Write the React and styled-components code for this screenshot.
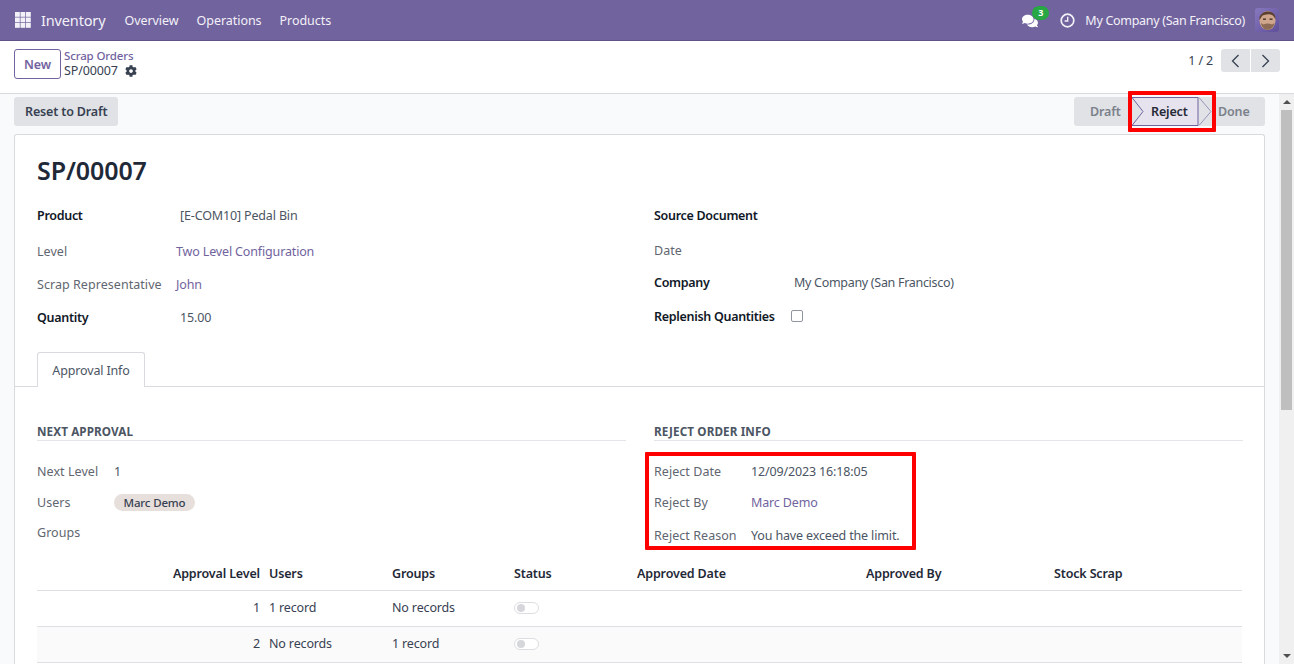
import React from 'react';
import styled, { createGlobalStyle } from 'styled-components';
import { FaCog, FaComments } from 'react-icons/fa';

const font = '"Noto Sans", "Open Sans", Arial, sans-serif';

const GlobalStyle = createGlobalStyle`
  html, body { margin: 0; padding: 0; height: 100%; overflow: hidden; }
  body { font-family: ${font}; font-size: 12.5px; letter-spacing: -0.15px; color: #374151; background: #fff; }
  * { box-sizing: border-box; }
`;

const Page = styled.div`
  width: 1294px;
  height: 664px;
  display: flex;
  flex-direction: column;
  overflow: hidden;
  position: relative;
`;

const NavBar = styled.header`
  height: 41px;
  flex: none;
  background: #71639e;
  border-bottom: 1px solid #5f5386;
  color: #f3f1f8;
  display: flex;
  align-items: center;
  padding: 0 15px;
`;

const AppsIcon = styled.svg`
  width: 16px;
  height: 16px;
  margin-right: 10px;
`;

const AppName = styled.span`
  font-size: 14.5px;
  margin-right: 19px;
`;

const NavLink = styled.span`
  margin-right: 18px;
  letter-spacing: -0.05px;
`;

const NavRight = styled.div`
  margin-left: auto;
  display: flex;
  align-items: center;
`;

const MessageWrap = styled.div`
  position: relative;
  width: 16px;
  height: 14px;
  margin-right: 22px;
  color: #fff;
  display: flex;
`;

const Badge = styled.span`
  position: absolute;
  top: -7px;
  left: 10px;
  width: 17px;
  height: 14px;
  border-radius: 7px;
  background: #28a745;
  color: #fff;
  font-size: 9px;
  font-weight: 700;
  line-height: 14px;
  text-align: center;
`;

const ClockIcon = styled.svg`
  width: 15px;
  height: 15px;
  margin-right: 10px;
`;

const CompanyName = styled.span`
  margin-right: 10px;
  letter-spacing: -0.3px;
`;

const Avatar = styled.svg`
  width: 24px;
  height: 24px;
  border-radius: 3px;
`;

const ControlPanel = styled.div`
  height: 53px;
  flex: none;
  background: #fff;
  border-bottom: 1px solid #d8dadd;
  display: flex;
  align-items: flex-start;
  padding: 8px 14px 0;
`;

const NewButton = styled.button`
  width: 47px;
  height: 30px;
  border: 1px solid #71639e;
  border-radius: 3px;
  background: #fff;
  color: #71639e;
  font: 600 12.5px ${font};
  letter-spacing: -0.15px;
  padding: 0;
  margin-right: 3px;
`;

const Breadcrumbs = styled.div`
  display: flex;
  flex-direction: column;
  line-height: 15px;
  margin-top: -1px;
`;

const CrumbLink = styled.span`
  color: #71639e;
  font-weight: 500;
  font-size: 11.5px;
  height: 15px;
`;

const CrumbCurrent = styled.span`
  display: flex;
  align-items: center;
  gap: 7px;
  color: #374151;
  font-size: 12.5px;
  svg { color: #374151; }
`;

const Pager = styled.div`
  margin-left: auto;
  display: flex;
  align-items: center;
`;

const PagerText = styled.span`
  margin-right: 8px;
`;

const PagerButton = styled.button`
  width: 29px;
  height: 23px;
  border: 0;
  padding: 0;
  background: #e0e2e6;
  display: flex;
  align-items: center;
  justify-content: center;
  border-radius: ${p => (p.$right ? '0 3px 3px 0' : '3px 0 0 3px')};
  margin-left: ${p => (p.$right ? '1px' : '0')};
`;

const Body = styled.div`
  flex: 1;
  display: flex;
  min-height: 0;
  background: #f9fafb;
`;

const Content = styled.main`
  flex: 1;
  min-width: 0;
  overflow: hidden;
  padding: 0 14px;
`;

const StatusRow = styled.div`
  height: 40px;
  display: flex;
  align-items: flex-start;
  justify-content: space-between;
  padding-top: 3px;
`;

const SmallButton = styled.button`
  height: 29px;
  padding: 0 11px;
  border: 0;
  border-radius: 3px;
  background: #e0e2e6;
  color: #374151;
  font: 600 12.5px ${font};
  letter-spacing: -0.15px;
`;

const StatusBar = styled.div`
  position: relative;
  width: 191px;
  height: 29px;
  border-radius: 3px;
  background: #e0e2e6;
  display: flex;
  align-items: center;
  font-weight: 600;
  color: #7b818a;
`;

const StatusArrow = styled.svg`
  position: absolute;
  left: 57px;
  top: 0;
`;

const StatusStep = styled.span`
  position: absolute;
  left: ${p => p.$left}px;
  color: ${p => (p.$active ? '#262a36' : '#7b818a')};
`;

const Sheet = styled.section`
  background: #fff;
  border: 1px solid #d8dadd;
  border-bottom: 0;
  border-radius: 3px 3px 0 0;
  height: 600px;
`;

const SheetTop = styled.div`
  padding: 0 22px;
`;

const Title = styled.h1`
  margin: 0;
  height: 64px;
  display: flex;
  align-items: center;
  padding-top: 6px;
  font-size: 25px;
  font-weight: 600;
  letter-spacing: -0.1px;
  color: #1f2937;
`;

const Columns = styled.div`
  display: grid;
  grid-template-columns: 589px 589px;
  column-gap: 28px;
`;

const Field = styled.div`
  height: ${p => p.$h}px;
  display: flex;
  align-items: center;
`;

const Label = styled.span`
  width: ${p => p.$w || 139}px;
  flex: none;
  color: ${p => (p.$strong ? '#111827' : '#5f6670')};
  font-weight: ${p => (p.$strong ? 600 : 400)};
  letter-spacing: ${p => (p.$strong ? '-0.3px' : '0.05px')};
`;

const Value = styled.span`
  color: ${p => (p.$link ? '#71639e' : '#4b5563')};
  padding-left: ${p => p.$pad || 0}px;
  letter-spacing: ${p => (p.$tight ? '-0.3px' : 'inherit')};
`;

const Check = styled.span`
  width: 12px;
  height: 12px;
  border: 1px solid #8f95a0;
  border-radius: 2px;
  background: #fff;
`;

const TabStrip = styled.div`
  height: 50px;
  padding: 15px 22px 0;
  border-bottom: 1px solid #d8dadd;
  display: flex;
`;

const Tab = styled.div`
  width: 108px;
  height: 35px;
  background: #fff;
  border: 1px solid #d8dadd;
  border-bottom: 0;
  border-radius: 3px 3px 0 0;
  display: flex;
  align-items: center;
  justify-content: center;
  color: #4b5563;
`;

const TabPane = styled.div`
  padding: 37px 22px 0;
`;

const SectionTitle = styled.h3`
  margin: 0 0 15px;
  height: 17px;
  line-height: 15px;
  border-bottom: 1px solid #e3e5e8;
  font-size: 11.7px;
  font-weight: 700;
  letter-spacing: 0.1px;
  text-transform: uppercase;
  color: #4b5563;
`;

const Pill = styled.span`
  height: 17px;
  padding: 0 9.5px;
  border-radius: 9px;
  background: #e7dfdc;
  color: #374151;
  font-size: 11.5px;
  font-weight: 500;
  line-height: 17px;
`;

const Table = styled.div`
  margin-top: 3px;
`;

const TableRow = styled.div`
  display: grid;
  grid-template-columns: 228px 123px 122px 123px 229px 188px 1fr;
  height: 36px;
  padding-bottom: 2px;
  align-items: center;
  border-bottom: 1px solid #dee0e3;
  background: ${p => (p.$alt ? '#fafafa' : '#fff')};
`;

const HeadRow = styled(TableRow)`
  height: 35px;
  padding-bottom: 0;
  font-weight: 600;
  color: #1f2937;
`;

const Cell = styled.span`
  padding: 0 4px;
  text-align: ${p => (p.$num ? 'right' : 'left')};
  padding-right: ${p => (p.$num ? '5px' : '4px')};
`;

const Toggle = styled.span`
  display: block;
  width: 25px;
  height: 12px;
  border: 1px solid #dcdee1;
  border-radius: 7px;
  background: #fff;
  position: relative;
  &::after {
    content: '';
    position: absolute;
    left: 2px;
    top: 1px;
    width: 8px;
    height: 8px;
    border-radius: 50%;
    background: #d5d7da;
  }
`;

const Scrollbar = styled.div`
  width: 15px;
  flex: none;
  background: #f0f0f0;
  display: flex;
  flex-direction: column;
  align-items: center;
  position: relative;
  height: 570px;
`;

const ScrollArrow = styled.div`
  width: 0;
  height: 0;
  border-left: 4px solid transparent;
  border-right: 4px solid transparent;
  ${p => (p.$up ? 'border-bottom: 4px solid #505050; margin-top: 6px;' : 'border-top: 4px solid #505050; margin-top: auto; margin-bottom: 6px;')}
`;

const ScrollThumb = styled.div`
  width: 11px;
  height: 300px;
  background: #bfbfbf;
  margin-top: 6px;
`;

const Highlight = styled.div`
  position: absolute;
  left: ${p => p.$x}px;
  top: ${p => p.$y}px;
  width: ${p => p.$w}px;
  height: ${p => p.$h}px;
  border: 4px solid #ff0000;
  border-radius: 1px;
  pointer-events: none;
`;

const AppsGlyph = () => (
  <AppsIcon viewBox="0 0 16 16" fill="#f3f1f8">
    {[0, 5.5, 11].flatMap(y =>
      [0, 5.5, 11].map(x => <rect key={`${x}-${y}`} x={x} y={y} width="4.8" height="4.8" />)
    )}
  </AppsIcon>
);

const ClockGlyph = () => (
  <ClockIcon viewBox="0 0 15 15" fill="none" stroke="#f3f1f8">
    <circle cx="7.5" cy="7.5" r="6.3" strokeWidth="1.7" />
    <path d="M7.7 3.8 V8 H4.6" strokeWidth="1.4" />
  </ClockIcon>
);

const AvatarFace = () => (
  <Avatar viewBox="0 0 24 24">
    <defs>
      <linearGradient id="avatarBg" x1="0" y1="0" x2="1" y2="1">
        <stop offset="0" stopColor="#8878c0" />
        <stop offset="1" stopColor="#5f4f98" />
      </linearGradient>
    </defs>
    <rect width="24" height="24" fill="url(#avatarBg)" />
    <ellipse cx="12.5" cy="12.5" rx="8" ry="9.5" fill="#cfa68c" />
    <path d="M4.5 12 C3 2 21 0 20.5 11 L19 9 C18 6.5 15 6 12 6.5 C9 7 7 7 6.5 9z" fill="#5b3f31" />
    <path d="M6 15 C7 24 18 24 19.5 15 L17 16.5 C14 15 11 15 8.5 16.5z" fill="#8d6a55" />
    <rect x="8" y="10.5" width="3" height="1.3" fill="#3a2a22" />
    <rect x="14.5" y="10.5" width="3" height="1.3" fill="#3a2a22" />
  </Avatar>
);

const Chevron = ({ right }) => (
  <svg width="9" height="14" viewBox="0 0 9 14" fill="none" stroke="#374151" strokeWidth="1.3">
    <path d={right ? 'M1.5 1 L7.5 7 L1.5 13' : 'M7.5 1 L1.5 7 L7.5 13'} />
  </svg>
);

const approvals = [
  { level: 1, users: '1 record', groups: 'No records' },
  { level: 2, users: 'No records', groups: '1 record', alt: true },
];

const App = () => (
  <Page>
    <GlobalStyle />
    <NavBar>
      <AppsGlyph />
      <AppName>Inventory</AppName>
      <NavLink>Overview</NavLink>
      <NavLink>Operations</NavLink>
      <NavLink>Products</NavLink>
      <NavRight>
        <MessageWrap>
          <FaComments size={16} />
          <Badge>3</Badge>
        </MessageWrap>
        <ClockGlyph />
        <CompanyName>My Company (San Francisco)</CompanyName>
        <AvatarFace />
      </NavRight>
    </NavBar>

    <ControlPanel>
      <NewButton>New</NewButton>
      <Breadcrumbs>
        <CrumbLink>Scrap Orders</CrumbLink>
        <CrumbCurrent>SP/00007 <FaCog size={12} /></CrumbCurrent>
      </Breadcrumbs>
      <Pager>
        <PagerText>1 / 2</PagerText>
        <PagerButton><Chevron /></PagerButton>
        <PagerButton $right><Chevron right /></PagerButton>
      </Pager>
    </ControlPanel>

    <Body>
      <Content>
        <StatusRow>
          <SmallButton>Reset to Draft</SmallButton>
          <StatusBar>
            <StatusStep $left={16}>Draft</StatusStep>
            <StatusArrow width="82" height="29" viewBox="0 0 82 29">
              <path d="M1 0.5 H67 V28.5 H1 L12 14.5z" fill="#e6e2ee" stroke="#71639e" />
              <path d="M68 0.5 L80 14.5 L68 28.5" fill="none" stroke="#9c92bd" />
            </StatusArrow>
            <StatusStep $left={77} $active>Reject</StatusStep>
            <StatusStep $left={144}>Done</StatusStep>
          </StatusBar>
        </StatusRow>

        <Sheet>
          <SheetTop>
            <Title>SP/00007</Title>
            <Columns>
              <div>
                <Field $h={32}><Label $strong>Product</Label><Value $pad={4}>[E-COM10] Pedal Bin</Value></Field>
                <Field $h={40}><Label>Level</Label><Value $link>Two Level Configuration</Value></Field>
                <Field $h={26}><Label>Scrap Representative</Label><Value $link>John</Value></Field>
                <Field $h={40}><Label $strong>Quantity</Label><Value $pad={4}>15.00</Value></Field>
              </div>
              <div>
                <Field $h={32}><Label $w={140} $strong>Source Document</Label></Field>
                <Field $h={38}><Label $w={140}>Date</Label></Field>
                <Field $h={26}><Label $w={140} $strong>Company</Label><Value $tight>My Company (San Francisco)</Value></Field>
                <Field $h={42}><Label $w={137} $strong>Replenish Quantities</Label><Check /></Field>
              </div>
            </Columns>
          </SheetTop>

          <TabStrip>
            <Tab>Approval Info</Tab>
          </TabStrip>

          <TabPane>
            <Columns>
              <div>
                <SectionTitle>Next Approval</SectionTitle>
                <Field $h={31}><Label $w={77}>Next Level</Label><Value>1</Value></Field>
                <Field $h={31}><Label $w={77}>Users</Label><Pill>Marc Demo</Pill></Field>
                <Field $h={29}><Label $w={77}>Groups</Label></Field>
              </div>
              <div>
                <SectionTitle>Reject Order Info</SectionTitle>
                <Field $h={31}><Label $w={97}>Reject Date</Label><Value>12/09/2023 16:18:05</Value></Field>
                <Field $h={31}><Label $w={97}>Reject By</Label><Value $link>Marc Demo</Value></Field>
                <Field $h={35}><Label $w={97}>Reject Reason</Label><Value>You have exceed the limit.</Value></Field>
              </div>
            </Columns>
            <Table>
              <HeadRow>
                <Cell $num>Approval Level</Cell>
                <Cell>Users</Cell>
                <Cell>Groups</Cell>
                <Cell>Status</Cell>
                <Cell>Approved Date</Cell>
                <Cell>Approved By</Cell>
                <Cell>Stock Scrap</Cell>
              </HeadRow>
              {approvals.map(row => (
                <TableRow key={row.level} $alt={row.alt}>
                  <Cell $num>{row.level}</Cell>
                  <Cell>{row.users}</Cell>
                  <Cell>{row.groups}</Cell>
                  <Cell><Toggle /></Cell>
                  <Cell />
                  <Cell />
                  <Cell />
                </TableRow>
              ))}
            </Table>
          </TabPane>
        </Sheet>
      </Content>
      <Scrollbar>
        <ScrollArrow $up />
        <ScrollThumb />
        <ScrollArrow />
      </Scrollbar>
    </Body>

    <Highlight $x={1128} $y={91} $w={88} $h={41} />
    <Highlight $x={645} $y={452} $w={271} $h={98} />
  </Page>
);

export default App;
